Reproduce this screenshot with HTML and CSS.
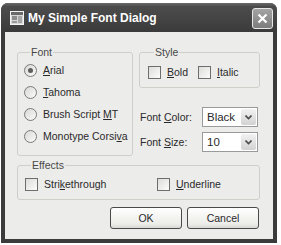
FILE: index.html
```html
<!DOCTYPE html>
<html lang="en">
<head>
    <meta charset="UTF-8">
    <title>My Simple Font Dialog</title>
    <link rel="stylesheet" href="styles.css">
</head>
<body>
    <div class="window">
        <div class="titlebar">
            <svg class="app-icon" width="14" height="14" viewBox="0 0 14 14">
                <rect x="0.5" y="0.5" width="13" height="13" fill="#d8d8d8" stroke="#f4f4f4"/>
                <rect x="1" y="1" width="12" height="3" fill="#6a6a6a"/>
                <rect x="2" y="5" width="5" height="4" fill="#8c8c8c"/>
                <rect x="8" y="5" width="4" height="7" fill="#a8a8a8"/>
                <rect x="2" y="10" width="5" height="2" fill="#9a9a9a"/>
            </svg>
            <span class="title">My Simple Font Dialog</span>
            <div class="close">
                <svg width="11" height="11" viewBox="0 0 11 11">
                    <path d="M1.5 1.5 L9.5 9.5 M9.5 1.5 L1.5 9.5" stroke="#fff" stroke-width="2.2"/>
                </svg>
            </div>
        </div>

        <div class="client">
            <div class="top-row">
                <fieldset class="group font-group">
                    <legend>Font</legend>
                    <div class="option"><span class="radio checked"></span><span><u>A</u>rial</span></div>
                    <div class="option"><span class="radio"></span><span><u>T</u>ahoma</span></div>
                    <div class="option"><span class="radio"></span><span>Brush Script <u>M</u>T</span></div>
                    <div class="option"><span class="radio"></span><span>Monotype Corsi<u>v</u>a</span></div>
                </fieldset>

                <div class="right-col">
                    <fieldset class="group style-group">
                        <legend>Style</legend>
                        <div class="check-row">
                            <div class="option bold-opt"><span class="check"></span><span><u>B</u>old</span></div>
                            <div class="option"><span class="check"></span><span><u>I</u>talic</span></div>
                        </div>
                    </fieldset>

                    <div class="field color-field">
                        <span class="field-label">Font <u>C</u>olor:</span>
                        <div class="combo"><span class="combo-text">Black</span><span class="combo-btn"><svg width="7" height="5" viewBox="0 0 7 5"><path d="M0.5 0.5 L3.5 3.5 L6.5 0.5" fill="none" stroke="#4d4d4d" stroke-width="1.6"/></svg></span></div>
                    </div>
                    <div class="field">
                        <span class="field-label">Font <u>S</u>ize:</span>
                        <div class="combo"><span class="combo-text">10</span><span class="combo-btn"><svg width="7" height="5" viewBox="0 0 7 5"><path d="M0.5 0.5 L3.5 3.5 L6.5 0.5" fill="none" stroke="#4d4d4d" stroke-width="1.6"/></svg></span></div>
                    </div>
                </div>
            </div>

            <fieldset class="group effects-group">
                <legend>Effects</legend>
                <div class="check-row">
                    <div class="option strike-opt"><span class="check"></span><span>Stri<u>k</u>ethrough</span></div>
                    <div class="option"><span class="check"></span><span><u>U</u>nderline</span></div>
                </div>
            </fieldset>

            <div class="buttons">
                <button class="btn">OK</button>
                <button class="btn">Cancel</button>
            </div>
        </div>
    </div>
</body>
</html>
```

FILE: styles.css
```css
body {
    margin: 0;
    padding: 0;
    background-color: #fff;
    font-family: "Liberation Sans", Arial, sans-serif;
    font-size: 10.5px;
    color: #2a2a2a;
    overflow: hidden;
}
.window {
    margin: 3px 0 0 1px;
    width: 276px;
    height: 240px;
    background-color: #3b3b3b;
    border-radius: 7px 7px 0 0;
    display: flex;
    flex-direction: column;
    box-sizing: border-box;
}
.titlebar {
    height: 29px;
    flex: none;
    display: flex;
    align-items: center;
    padding: 0 4px 0 9px;
    border-radius: 7px 7px 0 0;
    background: linear-gradient(to bottom, #6a6a6a 0%, #4c4c4c 12%, #454545 50%, #3a3a3a 100%);
}
.app-icon {
    flex: none;
    margin-top: 1px;
}
.title {
    margin-left: 4px;
    font-weight: bold;
    font-size: 12px;
    color: #fff;
    flex: 1;
    margin-top: 1px;
}
.close {
    width: 19px;
    height: 19px;
    border: 1px solid #e8e8e8;
    border-radius: 3px;
    background: linear-gradient(to bottom, #a4a4a4, #7c7c7c);
    display: flex;
    align-items: center;
    justify-content: center;
    margin-top: 2px;
}
.client {
    flex: 1;
    margin: 0 4px 4px 4px;
    background-color: #ececea;
    padding: 14px 13px 0 12px;
    display: flex;
    flex-direction: column;
}
.top-row {
    display: flex;
    gap: 6px;
}
.group {
    margin: 0;
    border: 1px solid #cfcfca;
    border-radius: 3px;
    padding: 0;
    min-width: 0;
}
.group legend {
    padding: 0 1px;
    margin-left: 6px;
    line-height: 13px;
    color: #484848;
}
.font-group {
    width: 116px;
    box-sizing: border-box;
    padding: 0 0 7px 6px;
    height: 110px;
}
.option {
    display: flex;
    align-items: center;
    height: 22px;
    white-space: nowrap;
}
.radio {
    width: 11px;
    height: 11px;
    border: 1px solid #7a7a7a;
    border-radius: 50%;
    background: linear-gradient(135deg, #d8d8d4, #fbfbfb);
    margin-right: 6px;
    display: flex;
    align-items: center;
    justify-content: center;
    flex: none;
}
.radio.checked::after {
    content: "";
    width: 5px;
    height: 5px;
    border-radius: 50%;
    background: #5e5e5e;
}
.right-col {
    flex: 1;
    display: flex;
    flex-direction: column;
}
.style-group {
    padding: 3px 0 5px 8px;
}
.check-row {
    display: flex;
}
.check-row .option {
    height: 20px;
}
.bold-opt {
    width: 50px;
}
.check {
    width: 11px;
    height: 11px;
    border: 1px solid #6e6e6e;
    background: linear-gradient(135deg, #dcdcd8, #fcfcfc);
    margin-right: 6px;
    flex: none;
}
.field {
    display: flex;
    align-items: center;
    margin-top: 5px;
    padding-left: 1px;
}
.color-field {
    margin-top: 19px;
}
.field-label {
    width: 62px;
}
.combo {
    width: 54px;
    height: 18px;
    border: 1px solid #9a9a9a;
    background: #fff;
    display: flex;
    align-items: center;
}
.combo-text {
    flex: 1;
    padding-left: 4px;
    font-size: 11.5px;
}
.combo-btn {
    width: 15px;
    height: 16px;
    margin-right: 1px;
    border-radius: 2px;
    background: linear-gradient(to bottom, #f2f2f2, #d2d2d2);
    display: flex;
    align-items: center;
    justify-content: center;
}
.effects-group {
    margin-top: 3px;
    padding: 2px 0 5px 7px;
}
.strike-opt {
    width: 132px;
}
.buttons {
    display: flex;
    justify-content: flex-end;
    gap: 5px;
    margin-top: 7px;
    padding-right: 1px;
}
.btn {
    width: 72px;
    height: 22px;
    font-family: "Liberation Sans", Arial, sans-serif;
    font-size: 10.5px;
    color: #2a2a2a;
    border: 1px solid #4a4a4a;
    border-radius: 3px;
    background: linear-gradient(to bottom, #ffffff, #ecece8 80%, #d8d8d4);
    padding: 0;
}
```
